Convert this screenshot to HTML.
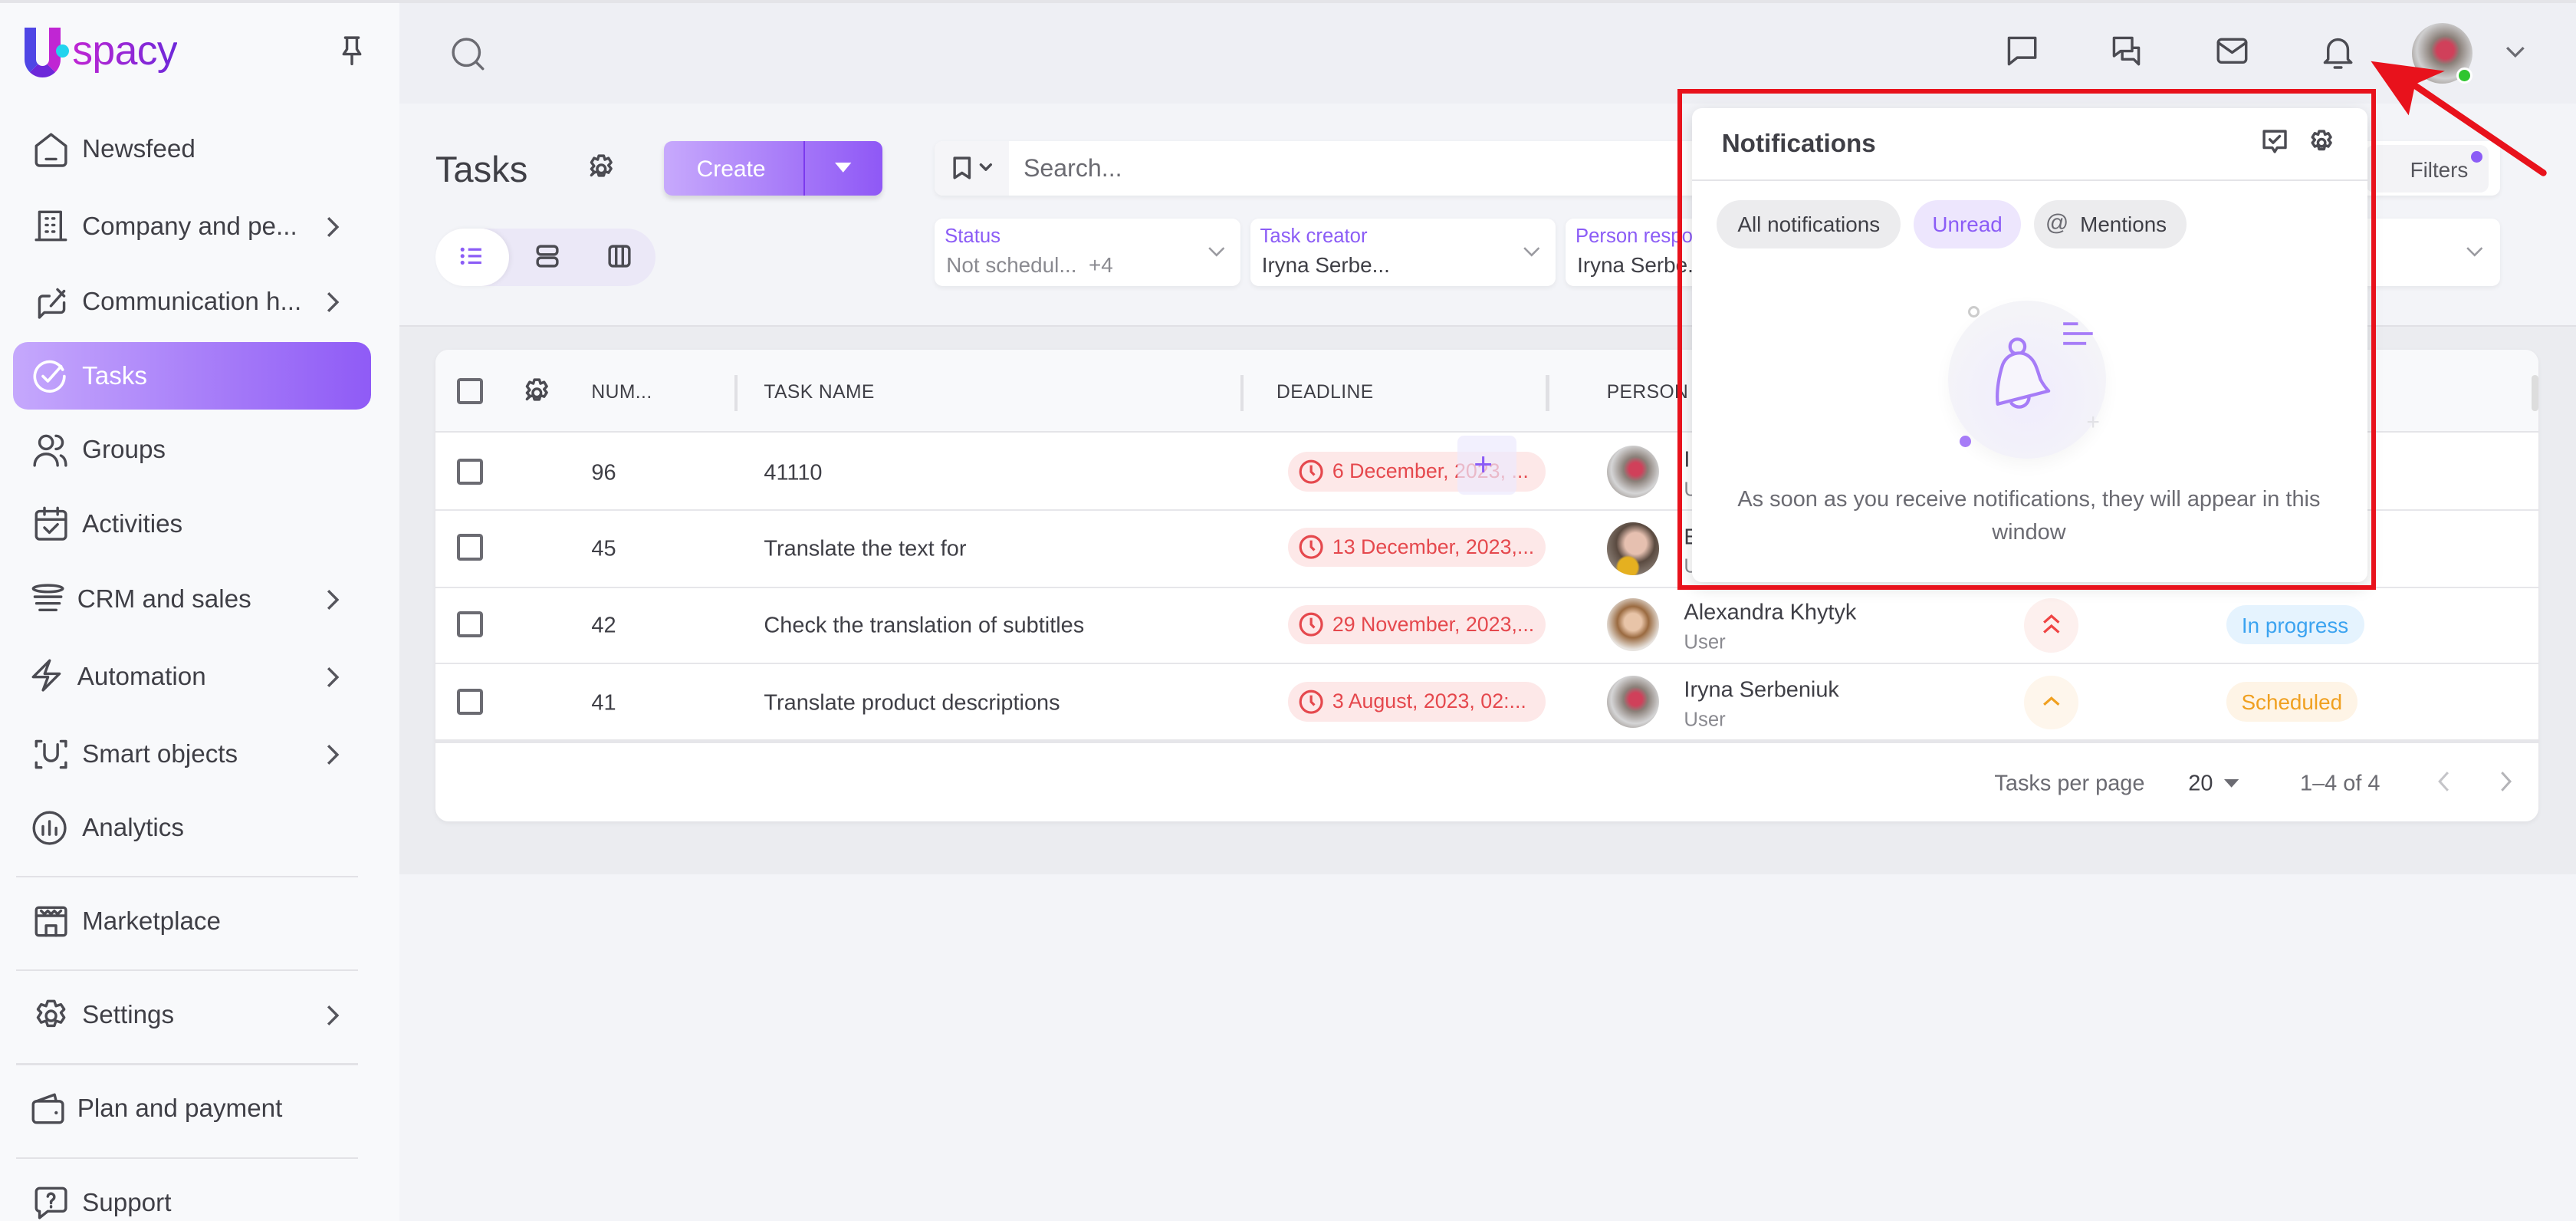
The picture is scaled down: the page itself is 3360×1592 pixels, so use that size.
<!DOCTYPE html>
<html><head><meta charset="utf-8"><style>
*{box-sizing:border-box;margin:0;padding:0}
html,body{width:3360px;height:1592px;overflow:hidden;background:#f3f4f8}
#w{width:1568px;height:743px;zoom:2.142857;position:relative;font-family:"Liberation Sans",sans-serif;color:#3f3f46;background:#f3f4f8;overflow:hidden}
.a{position:absolute}
svg{position:absolute;overflow:visible}
.side{left:0;top:0;width:243px;height:743px;background:#f8f9fb;border-top:2px solid #e4e4e8}
.nav{position:absolute;left:50px;font-size:15.5px;color:#3f3f46;transform:translateY(-50%);margin-top:1px}
.chev{position:absolute;left:199px;width:8px;height:13px;transform:translateY(-50%);margin-top:1px}
.div{position:absolute;left:10px;width:208px;height:1px;background:#e2e2e6}
.ic{stroke:#4b4b52;fill:none;stroke-width:1.6;stroke-linecap:round;stroke-linejoin:round}
.th{position:absolute;top:239px;font-size:11.5px;color:#3f3f46;transform:translateY(-50%);letter-spacing:.2px}
.td{position:absolute;font-size:13.5px;color:#3f3f46;transform:translateY(-50%);margin-top:1px}
.cb{position:absolute;left:278px;width:16px;height:16px;border:2px solid #6b6b72;border-radius:2px}
.pill{position:absolute;left:784px;width:157px;height:24px;border-radius:12px;background:#fde8e8;color:#e5484d;font-size:12.5px;line-height:24px;padding-left:27px;white-space:nowrap}
.pill svg{left:6px;top:4px}
.av{position:absolute;left:978px;width:32px;height:32px;border-radius:50%;overflow:hidden}
.rowl{position:absolute;left:265px;width:1280px;height:1px;background:#e6e6ea}
.fc{position:absolute;top:133px;height:41px;background:#fff;border-radius:5px;box-shadow:0 1px 3px rgba(0,0,0,.06)}
.fc .l{position:absolute;left:6px;top:4px;font-size:12px;color:#8b5cf6}
.fc .v{position:absolute;left:7px;top:21px;font-size:13px;color:#3f3f46;white-space:nowrap}
.chip{position:absolute;top:122px;height:29px;border-radius:15px;background:#ececee;font-size:13px;line-height:30px;color:#3f3f46;text-align:center}
</style></head><body><div id="w">
<div class="a" style="left:243px;top:0;width:1325px;height:63px;background:#eeeff4;border-top:2px solid #e4e4e8"></div>
<div class="a" style="left:243px;top:63px;width:1325px;height:135px;background:#f3f4f8"></div>
<div class="a" style="left:243px;top:198px;width:1325px;height:334px;background:#ebecf0;border-top:1px solid #e0e0e5"></div>

<div class="a side"></div>
<div class="a" style="left:15px;top:17px;width:22px;height:30px;border-radius:0 0 12px 12px;border:7px solid;border-top:none;border-color:#7b2fd0 #c026d3 #6d28d9 #4f46e5"></div>
<div class="a" style="left:34px;top:27px;width:8px;height:8px;border-radius:50%;background:#22d3ee"></div>
<div class="a" style="left:44px;top:17px;font-size:25px;color:#a21caf;letter-spacing:-.3px;background:linear-gradient(90deg,#c026d3,#6d28d9);-webkit-background-clip:text;color:transparent">spacy</div>
<svg style="left:207px;top:22px" width="14" height="18"><path class="ic" d="M3 1h8M4 1v7l-2 3h10l-2-3V1M7 11v6" stroke-width="1.3"/></svg>

<svg style="left:20px;top:80px" width="22" height="22"><path class="ic" d="M2 9l9-7 9 7v10a2 2 0 0 1-2 2H4a2 2 0 0 1-2-2z M8 17h6"/></svg>
<div class="nav" style="top:90px">Newsfeed</div>
<svg style="left:21px;top:127px" width="20" height="20"><path class="ic" d="M3 19V2h13v17M1 19h18M7 6h1M11 6h1M7 10h1M11 10h1M7 14h1M11 14h1"/></svg>
<div class="nav" style="top:137px">Company and pe...</div><svg class="chev" style="top:137px"><path d="M1 1l5.5 5.5L1 12" fill="none" stroke="#55555c" stroke-width="1.6"/></svg>
<svg style="left:21px;top:173px" width="22" height="22"><path class="ic" d="M3 20V9a2 2 0 0 1 2-2h4M3 20l3-3h10a2 2 0 0 0 2-2v-4M10 13l8-9M14 3l4 4"/></svg>
<div class="nav" style="top:183px">Communication h...</div><svg class="chev" style="top:183px"><path d="M1 1l5.5 5.5L1 12" fill="none" stroke="#55555c" stroke-width="1.6"/></svg>

<div class="a" style="left:8px;top:208px;width:218px;height:41px;border-radius:9px;background:linear-gradient(90deg,#c5a8fc,#8f5bf6)"></div>
<svg style="left:19px;top:218px" width="22" height="22"><path d="M19 7A9 9 0 1 0 20 11" fill="none" stroke="#fff" stroke-width="1.7" stroke-linecap="round"/><path d="M7 11l3 3 8-9" fill="none" stroke="#fff" stroke-width="1.7" stroke-linecap="round" stroke-linejoin="round"/></svg>
<div class="nav" style="top:228px;color:#fff">Tasks</div>

<svg style="left:20px;top:263px" width="22" height="22"><circle class="ic" cx="8" cy="6" r="4"/><path class="ic" d="M1 20c0-4 3-7 7-7s7 3 7 7M14 2a4 4 0 0 1 0 8M17 14c2 1 3 3 3 6"/></svg>
<div class="nav" style="top:273px">Groups</div>
<svg style="left:20px;top:307px" width="22" height="22"><rect class="ic" x="2" y="4" width="18" height="17" rx="2"/><path class="ic" d="M7 2v4M15 2v4M2 9h18M7 14l3 3 5-5"/></svg>
<div class="nav" style="top:318px">Activities</div>
<svg style="left:18px;top:355px" width="22" height="20"><ellipse class="ic" cx="11" cy="3" rx="9" ry="2"/><path class="ic" d="M3 8h16M4 12h14M6 16h10"/></svg>
<div class="nav" style="left:47px;top:364px">CRM and sales</div><svg class="chev" style="top:364px"><path d="M1 1l5.5 5.5L1 12" fill="none" stroke="#55555c" stroke-width="1.6"/></svg>
<svg style="left:18px;top:400px" width="22" height="22"><path class="ic" d="M12 2L2 12h9l-3 8 10-10H9z"/></svg>
<div class="nav" style="left:47px;top:411px">Automation</div><svg class="chev" style="top:411px"><path d="M1 1l5.5 5.5L1 12" fill="none" stroke="#55555c" stroke-width="1.6"/></svg>
<svg style="left:20px;top:448px" width="22" height="22"><path class="ic" d="M2 6V3h3M17 3h3v3M20 16v3h-3M5 19H2v-3M7 5v6a4 4 0 0 0 8 0V5"/></svg>
<div class="nav" style="top:458px">Smart objects</div><svg class="chev" style="top:458px"><path d="M1 1l5.5 5.5L1 12" fill="none" stroke="#55555c" stroke-width="1.6"/></svg>
<svg style="left:19px;top:493px" width="22" height="22"><circle class="ic" cx="11" cy="11" r="9.5"/><path class="ic" d="M7 10v5M11 7v8M15 11v4"/></svg>
<div class="nav" style="top:503px">Analytics</div>
<div class="div" style="top:533px"></div>
<svg style="left:20px;top:550px" width="22" height="22"><rect class="ic" x="2" y="2" width="18" height="17" rx="1.5"/><path class="ic" d="M2 7h18M5 4l2 2 2-2 2 2 2-2 2 2 2-2M8 19v-6h6v6"/></svg>
<div class="nav" style="top:560px">Marketplace</div>
<div class="div" style="top:590px"></div>
<svg style="left:20px;top:607px" width="22" height="22"><circle class="ic" cx="11" cy="11" r="3"/><path class="ic" d="M9 2h4l1 3 3-1 2 3-2 2 2 3-2 3-3-1-1 3H9l-1-3-3 1-2-3 2-3-2-2 2-3 3 1z"/></svg>
<div class="nav" style="top:617px">Settings</div><svg class="chev" style="top:617px"><path d="M1 1l5.5 5.5L1 12" fill="none" stroke="#55555c" stroke-width="1.6"/></svg>
<div class="div" style="top:647px"></div>
<svg style="left:18px;top:664px" width="22" height="22"><rect class="ic" x="2" y="6" width="18" height="13" rx="2"/><path class="ic" d="M4 6l11-4 1 4"/><circle cx="16" cy="13" r="1" fill="#4b4b52"/></svg>
<div class="nav" style="left:47px;top:674px">Plan and payment</div>
<div class="div" style="top:704px"></div>
<svg style="left:20px;top:721px" width="22" height="22"><path class="ic" d="M4 2h14a2 2 0 0 1 2 2v10a2 2 0 0 1-2 2H9l-5 4v-4a2 2 0 0 1-2-2V4a2 2 0 0 1 2-2z"/><path class="ic" d="M9 7a2 2 0 1 1 3 2l-1 1v1M11 13v.5"/></svg>
<div class="nav" style="top:731px">Support</div>

<svg style="left:275px;top:23px" width="22" height="22"><circle cx="9" cy="9" r="8" fill="none" stroke="#6b6b72" stroke-width="1.6"/><path d="M15 15l4 4" stroke="#6b6b72" stroke-width="1.6" stroke-linecap="round"/></svg>
<svg style="left:1220px;top:20px" width="22" height="22"><path class="ic" d="M3 3h16v12H8l-5 4z"/></svg>
<svg style="left:1284px;top:20px" width="22" height="22"><path class="ic" d="M3 3h11v8H7l-4 3zM8 11v5h7l3 3v-10h-4"/></svg>
<svg style="left:1348px;top:22px" width="22" height="20"><rect class="ic" x="2" y="2" width="17" height="14" rx="2"/><path class="ic" d="M2 4l8.5 6L19 4"/></svg>
<svg style="left:1412px;top:20px" width="22" height="24"><path class="ic" d="M5 16V10a6 6 0 0 1 12 0v6l2 2H3z M9 21h4"/></svg>
<div class="a" style="left:1468px;top:14px;width:37px;height:37px;border-radius:50%;background:radial-gradient(circle at 55% 45%,#d0405a 0 18%,#8a7f78 30%,#cfcfd0 60%,#6f6258 100%)"></div>
<div class="a" style="left:1495px;top:41px;width:10px;height:10px;border-radius:50%;background:#2fc52f;border:1.5px solid #fff"></div>
<svg style="left:1525px;top:28px" width="12" height="8"><path d="M1 1l5 5 5-5" fill="none" stroke="#6b6b72" stroke-width="1.5"/></svg>

<div class="a" style="left:265px;top:90px;font-size:22px;color:#3f3f46">Tasks</div>
<svg style="left:357px;top:94px" width="18" height="18"><circle class="ic" cx="9" cy="9" r="2.5" stroke-width="1.3"/><path class="ic" stroke-width="1.3" d="M7.5 1h3l.7 2.3 2.2-.9 1.6 2.6-1.6 1.8 1.6 2-1.6 2.5-2.2-.9-.7 2.6h-3l-.7-2.6-2.2.9L3 12.8l1.6-2L3 9l1.6-1.8L3 5l1.6-2.6 2.2.9z"/></svg>
<div class="a" style="left:404px;top:86px;width:133px;height:33px;border-radius:5px;background:linear-gradient(90deg,#c7a9fc,#8f58f6);box-shadow:0 2px 3px rgba(0,0,0,.12)"></div>
<div class="a" style="left:489px;top:86px;width:1px;height:33px;background:#7c3aed"></div>
<div class="a" style="left:424px;top:95px;font-size:14px;color:#fff">Create</div>
<svg style="left:508px;top:99px" width="10" height="7"><path d="M0 0h10L5 6z" fill="#fff"/></svg>
<div class="a" style="left:265px;top:139px;width:134px;height:35px;border-radius:18px;background:#ebe8f7"></div>
<div class="a" style="left:265px;top:139px;width:45px;height:35px;border-radius:18px;background:#fff;box-shadow:1px 0 3px rgba(0,0,0,.06)"></div>
<svg style="left:280px;top:150px" width="14" height="12"><path d="M5 2h8M5 6h8M5 10h8" stroke="#8b5cf6" stroke-width="1.5"/><circle cx="1.5" cy="2" r="1.2" fill="#8b5cf6"/><circle cx="1.5" cy="6" r="1.2" fill="#8b5cf6"/><circle cx="1.5" cy="10" r="1.2" fill="#8b5cf6"/></svg>
<svg style="left:326px;top:149px" width="14" height="14"><rect class="ic" x="1" y="1" width="12" height="5" rx="2" stroke-width="1.3"/><rect class="ic" x="1" y="8" width="12" height="5" rx="2" stroke-width="1.3"/></svg>
<svg style="left:370px;top:149px" width="14" height="14"><rect class="ic" x="1" y="1" width="12" height="12" rx="2" stroke-width="1.3"/><path class="ic" d="M5 1v12M9 1v12" stroke-width="1.3"/></svg>

<div class="a" style="left:569px;top:86px;width:953px;height:33px;border-radius:5px;background:#fff;box-shadow:0 1px 3px rgba(0,0,0,.06);overflow:hidden"><div style="width:45px;height:33px;background:#f5f5f8"></div></div>
<svg style="left:580px;top:95px" width="26" height="14"><path class="ic" stroke-width="1.3" d="M1 1h9v12l-4.5-3L1 13z M17 5l3 3 3-3"/></svg>
<div class="a" style="left:623px;top:94px;font-size:15px;color:#6b6b72">Search...</div>
<div class="a" style="left:1440px;top:88px;width:75px;height:29px;border-radius:5px;background:#f3f3f6"></div>
<div class="a" style="left:1467px;top:96px;font-size:13px;color:#55555c">Filters</div>
<div class="a" style="left:1504px;top:92px;width:7px;height:7px;border-radius:50%;background:#8b5cf6"></div>

<div class="fc" style="left:569px;width:186px"><div class="l">Status</div><div class="v" style="color:#8a8a90">Not schedul...&nbsp; +4</div><svg style="left:166px;top:17px" width="11" height="7"><path d="M1 1l4.5 4.5L10 1" fill="none" stroke="#9a9aa0" stroke-width="1.2"/></svg></div>
<div class="fc" style="left:761px;width:186px"><div class="l">Task creator</div><div class="v">Iryna Serbe...</div><svg style="left:166px;top:17px" width="11" height="7"><path d="M1 1l4.5 4.5L10 1" fill="none" stroke="#9a9aa0" stroke-width="1.2"/></svg></div>
<div class="fc" style="left:953px;width:186px"><div class="l">Person respo</div><div class="v">Iryna Serbe...</div></div>
<div class="fc" style="left:1145px;width:377px"><svg style="left:356px;top:17px" width="11" height="7"><path d="M1 1l4.5 4.5L10 1" fill="none" stroke="#9a9aa0" stroke-width="1.2"/></svg></div>

<div class="a" style="left:265px;top:213px;width:1280px;height:287px;background:#fff;border-radius:8px;box-shadow:0 1px 3px rgba(0,0,0,.05);overflow:hidden"><div style="height:50px;background:#f8f9fb;border-bottom:1px solid #e4e4e8"></div></div>
<div class="a" style="left:1541px;top:228px;width:4px;height:22px;background:#ddd;border-radius:2px"></div>
<div class="cb" style="top:230px"></div>
<svg style="left:318px;top:230px" width="18" height="18"><circle class="ic" cx="9" cy="9" r="2.5" stroke-width="1.3"/><path class="ic" stroke-width="1.3" d="M7.5 1h3l.7 2.3 2.2-.9 1.6 2.6-1.6 1.8 1.6 2-1.6 2.5-2.2-.9-.7 2.6h-3l-.7-2.6-2.2.9L3 12.8l1.6-2L3 9l1.6-1.8L3 5l1.6-2.6 2.2.9z"/></svg>
<div class="th" style="left:360px">NUM...</div>
<div class="a" style="left:447px;top:228px;width:2px;height:22px;background:#e0e0e4"></div>
<div class="th" style="left:465px">TASK NAME</div>
<div class="a" style="left:755px;top:228px;width:2px;height:22px;background:#e0e0e4"></div>
<div class="th" style="left:777px">DEADLINE</div>
<div class="a" style="left:941px;top:228px;width:2px;height:22px;background:#e0e0e4"></div>
<div class="th" style="left:978px">PERSON R</div>

<div class="rowl" style="top:310px"></div><div class="rowl" style="top:357px"></div><div class="rowl" style="top:403px"></div><div class="rowl" style="top:450px;height:2px"></div>

<div class="cb" style="top:279px"></div><div class="td" style="left:360px;top:287px">96</div><div class="td" style="left:465px;top:287px">41110</div>
<div class="pill" style="top:275px"><svg width="16" height="16"><circle cx="8" cy="8" r="6.5" fill="none" stroke="#e5484d" stroke-width="1.5"/><path d="M8 4v4l2 2" fill="none" stroke="#e5484d" stroke-width="1.5"/></svg>6 December, 2023, ...</div>
<div class="a" style="left:887px;top:265px;width:36px;height:36px;background:rgba(237,233,254,.7);border-radius:4px"></div>
<div class="a" style="left:897px;top:274px;font-size:20px;color:#8b5cf6;line-height:18px">+</div>
<div class="av" style="top:271px;background:radial-gradient(circle at 55% 45%,#d0405a 0 16%,#8a7f78 30%,#d5d5d6 60%,#6f6258 100%)"></div>
<div class="td" style="left:1025px;top:279px">I</div><div class="td" style="left:1025px;top:297px;font-size:12px;color:#8a8a90">U</div>

<div class="cb" style="top:325px"></div><div class="td" style="left:360px;top:333px">45</div><div class="td" style="left:465px;top:333px">Translate the text for</div>
<div class="pill" style="top:321px"><svg width="16" height="16"><circle cx="8" cy="8" r="6.5" fill="none" stroke="#e5484d" stroke-width="1.5"/><path d="M8 4v4l2 2" fill="none" stroke="#e5484d" stroke-width="1.5"/></svg>13 December, 2023,...</div>
<div class="av" style="top:318px;background:radial-gradient(circle at 40% 85%,#e5b020 0 18%,transparent 22%),radial-gradient(circle at 55% 40%,#e6c0b0 0 25%,#5a4a40 45%,#b0a8a0 100%)"></div>
<div class="td" style="left:1025px;top:326px">E</div><div class="td" style="left:1025px;top:344px;font-size:12px;color:#8a8a90">U</div>

<div class="cb" style="top:372px"></div><div class="td" style="left:360px;top:380px">42</div><div class="td" style="left:465px;top:380px">Check the translation of subtitles</div>
<div class="pill" style="top:368px"><svg width="16" height="16"><circle cx="8" cy="8" r="6.5" fill="none" stroke="#e5484d" stroke-width="1.5"/><path d="M8 4v4l2 2" fill="none" stroke="#e5484d" stroke-width="1.5"/></svg>29 November, 2023,...</div>
<div class="av" style="top:364px;background:radial-gradient(circle at 50% 45%,#e8c4a8 0 22%,#9a6a40 40%,#e8e4e0 70%)"></div>
<div class="td" style="left:1025px;top:372px">Alexandra Khytyk</div><div class="td" style="left:1025px;top:390px;font-size:12px;color:#8a8a90">User</div>
<div class="a" style="left:1232px;top:364px;width:33px;height:33px;border-radius:50%;background:#fdf0ee"></div>
<svg style="left:1243px;top:374px" width="11" height="13"><path d="M1 5l4.5-4L10 5M1 11l4.5-4L10 11" fill="none" stroke="#ef4444" stroke-width="1.5"/></svg>
<div class="a" style="left:1355px;top:368px;width:84px;height:24px;border-radius:12px;background:#e5f3fe;color:#3ba3f0;font-size:13px;line-height:25px;text-align:center">In progress</div>

<div class="cb" style="top:419px"></div><div class="td" style="left:360px;top:427px">41</div><div class="td" style="left:465px;top:427px">Translate product descriptions</div>
<div class="pill" style="top:415px"><svg width="16" height="16"><circle cx="8" cy="8" r="6.5" fill="none" stroke="#e5484d" stroke-width="1.5"/><path d="M8 4v4l2 2" fill="none" stroke="#e5484d" stroke-width="1.5"/></svg>3 August, 2023, 02:...</div>
<div class="av" style="top:411px;background:radial-gradient(circle at 55% 45%,#d0405a 0 16%,#8a7f78 30%,#d5d5d6 60%,#6f6258 100%)"></div>
<div class="td" style="left:1025px;top:419px">Iryna Serbeniuk</div><div class="td" style="left:1025px;top:437px;font-size:12px;color:#8a8a90">User</div>
<div class="a" style="left:1232px;top:411px;width:33px;height:33px;border-radius:50%;background:#fef6ec"></div>
<svg style="left:1243px;top:423px" width="11" height="7"><path d="M1 6l4.5-4L10 6" fill="none" stroke="#f0a020" stroke-width="1.5"/></svg>
<div class="a" style="left:1355px;top:415px;width:80px;height:24px;border-radius:12px;background:#fef4e6;color:#f0a020;font-size:13px;line-height:25px;text-align:center">Scheduled</div>

<div class="td" style="left:1214px;top:476px;color:#6b6b72">Tasks per page</div>
<div class="td" style="left:1332px;top:476px">20</div>
<svg style="left:1354px;top:474px" width="9" height="5"><path d="M0 0h9L4.5 5z" fill="#6b6b72"/></svg>
<div class="td" style="left:1400px;top:476px;color:#6b6b72">1–4 of 4</div>
<svg style="left:1484px;top:469px" width="8" height="13"><path d="M6 1L1 6.5 6 12" fill="none" stroke="#c4c4c8" stroke-width="1.4"/></svg>
<svg style="left:1521px;top:469px" width="8" height="13"><path d="M2 1l5 5.5L2 12" fill="none" stroke="#b4b4b8" stroke-width="1.4"/></svg>

<div class="a" style="left:1030px;top:66px;width:411px;height:288px;background:#fff;border-radius:6px;box-shadow:0 3px 10px rgba(0,0,0,.15)"></div>
<div class="a" style="left:1021px;top:54px;width:425px;height:305px;border:3px solid #e8121c"></div>
<div class="a" style="left:1048px;top:79px;font-size:15.5px;font-weight:bold;color:#3f3f46">Notifications</div>
<svg style="left:1377px;top:79px" width="15" height="17"><path class="ic" stroke-width="1.2" d="M1 1h13v10H9l-1.5 2.5L6 11H1z M4.5 6l2 2 4-4"/></svg>
<svg style="left:1405px;top:79px" width="16" height="16"><circle class="ic" cx="8" cy="8" r="2.2" stroke-width="1.2"/><path class="ic" stroke-width="1.2" d="M6.5 1h3l.6 2 2-.8 1.5 2.4-1.5 1.6 1.5 1.8-1.5 2.3-2-.8-.6 2.4h-3l-.6-2.4-2 .8-1.5-2.3 1.5-1.8L2.4 4.6 3.9 2.2l2 .8z"/></svg>
<div class="a" style="left:1030px;top:109px;width:411px;height:1px;background:#e4e4e8"></div>
<div class="chip" style="left:1045px;width:112px">All notifications</div>
<div class="chip" style="left:1165px;width:65px;background:#ede6fd;color:#8b5cf6">Unread</div>
<div class="chip" style="left:1238px;width:93px;padding-left:16px">Mentions</div>
<div class="a" style="left:1245px;top:128px;font-size:14px;color:#6b6b72">@</div>
<div class="a" style="left:1186px;top:183px;width:96px;height:96px;border-radius:50%;background:radial-gradient(circle at 50% 60%,#f0ecfd,#f4f4f8 70%);box-shadow:0 4px 10px rgba(0,0,0,.04)"></div>
<div class="a" style="left:1198px;top:186px;width:7px;height:7px;border-radius:50%;border:1.5px solid #ccc"></div>
<div class="a" style="left:1193px;top:265px;width:7px;height:7px;border-radius:50%;background:#a67cf7"></div>
<div class="a" style="left:1270px;top:249px;font-size:14px;color:#e2e2e6">+</div>
<svg style="left:1255px;top:196px" width="20" height="16"><path d="M1 1h9M1 7h18M1 13h14" stroke="#a67cf7" stroke-width="1.8"/></svg>
<svg style="left:1211px;top:205px" width="50" height="50"><circle cx="17" cy="6" r="4.5" fill="none" stroke="#a67cf7" stroke-width="2"/><path d="M5 41c-1-8 1-18 3-24 3-7 11-9 16-5 4 3 5 8 7 14 2 4 5 7 5 7z M13 40a6 6 0 0 0 11-4" fill="#f7f5fc" stroke="#a67cf7" stroke-width="2" stroke-linejoin="round"/></svg>
<div class="a" style="left:1040px;top:294px;width:390px;text-align:center;font-size:13.5px;line-height:20px;color:#6b6b72">As soon as you receive notifications, they will appear in this window</div>

<svg style="left:1440px;top:25px" width="115" height="85"><path d="M108 80L30 27" stroke="#e8121c" stroke-width="4" stroke-linecap="round"/><path d="M3 12L48 18 30 26 26 45z" fill="#e8121c"/></svg>
</div></body></html>
